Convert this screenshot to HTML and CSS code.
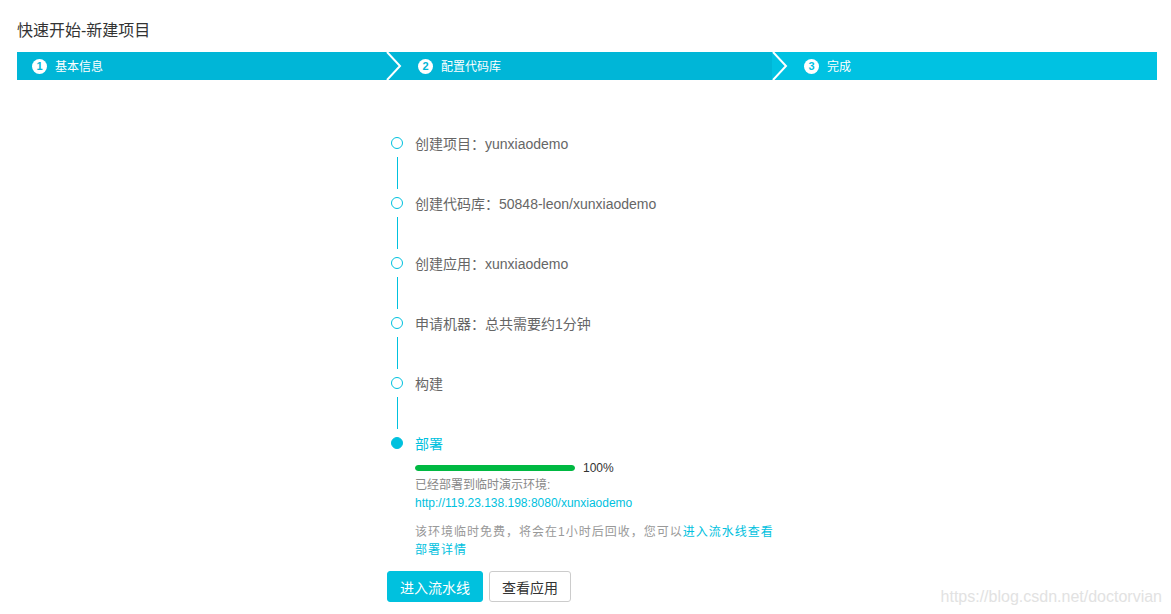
FILE: index.html
```html
<!DOCTYPE html>
<html lang="zh-CN">
  <head>
    <meta charset="UTF-8" />
    <meta name="viewport" content="width=device-width, initial-scale=1.0" />
    <title>快速开始-新建项目</title>
    <link rel="stylesheet" href="styles.css">
  </head>
  <body>
    <div class="page">
      <h1 class="title">快速开始-新建项目</h1>

      <!-- Steps -->
      <div class="steps">
        <div class="step step-first done">
          <span class="step-num">1</span>
          <span class="step-label">基本信息</span>
          <svg class="chevron" width="18" height="28" viewBox="0 0 18 28">
            <polyline points="1,0 14,14 1,28" fill="none" stroke="#fff" stroke-width="2" />
          </svg>
        </div>
        <div class="step done">
          <span class="step-num">2</span>
          <span class="step-label">配置代码库</span>
          <svg class="chevron" width="18" height="28" viewBox="0 0 18 28">
            <polyline points="1,0 14,14 1,28" fill="none" stroke="#fff" stroke-width="2" />
          </svg>
        </div>
        <div class="step current">
          <span class="step-num">3</span>
          <span class="step-label">完成</span>
        </div>
      </div>

      <!-- Result -->
      <div class="result">
        <ul class="timeline">
          <li class="tl-item">
            <span class="tl-dot"></span>
            <span class="tl-text">创建项目：yunxiaodemo</span>
          </li>
          <li class="tl-line"></li>
          <li class="tl-item">
            <span class="tl-dot"></span>
            <span class="tl-text">创建代码库：50848-leon/xunxiaodemo</span>
          </li>
          <li class="tl-line"></li>
          <li class="tl-item">
            <span class="tl-dot"></span>
            <span class="tl-text">创建应用：xunxiaodemo</span>
          </li>
          <li class="tl-line"></li>
          <li class="tl-item">
            <span class="tl-dot"></span>
            <span class="tl-text">申请机器：总共需要约1分钟</span>
          </li>
          <li class="tl-line"></li>
          <li class="tl-item">
            <span class="tl-dot"></span>
            <span class="tl-text">构建</span>
          </li>
          <li class="tl-line"></li>
          <li class="tl-item active">
            <span class="tl-dot"></span>
            <span class="tl-text">部署</span>
          </li>
        </ul>

        <div class="deploy">
          <div class="progress-row">
            <div class="progress"><div class="progress-fill" style="width: 100%"></div></div>
            <span class="progress-text">100%</span>
          </div>
          <div class="deploy-info">
            已经部署到临时演示环境:<br />
            <a href="#">http://119.23.138.198:8080/xunxiaodemo</a>
          </div>
          <p class="deploy-note">
            <span>该环境临时免费，将会在1小时后回收，您可以</span><a href="#">进入流水线查看</a><br />
            <a href="#">部署详情</a>
          </p>
        </div>

        <div class="actions">
          <button class="btn btn-primary">进入流水线</button>
          <button class="btn">查看应用</button>
        </div>
      </div>
    </div>

    <div class="watermark">https://blog.csdn.net/doctorvian</div>
  </body>
</html>
```

FILE: styles.css
```css
body {
  margin: 0;
  font-family: "Liberation Sans", "Noto Sans CJK SC", sans-serif;
  color: #333;
  background: #fff;
}

.page {
  padding: 0 14px 0 17px;
}

.title {
  margin: 0;
  padding-top: 20px;
  font-size: 16px;
  font-weight: normal;
  line-height: 22px;
  color: #333;
}

/* steps bar */
.steps {
  display: flex;
  height: 28px;
  margin-top: 10px;
}

.step {
  position: relative;
  box-sizing: border-box;
  display: flex;
  align-items: center;
  flex: none;
  width: 386px;
  padding-left: 32px;
  padding-top: 1px;
  background-color: #00c2e2;
  color: #fff;
  font-size: 12px;
  line-height: 14px;
}

.step.done {
  background-color: #00b6d7;
}

.step-first {
  width: 369px;
  padding-left: 15px;
}

.step.current {
  flex: 1;
}

.step-num {
  width: 15px;
  height: 15px;
  border-radius: 50%;
  background: #fff;
  color: #00b6d7;
  font-size: 11px;
  font-weight: bold;
  line-height: 15px;
  text-align: center;
  margin-right: 8px;
}

.step.current .step-num {
  color: #00c2e2;
}

.chevron {
  position: absolute;
  right: -18px;
  top: 0;
  z-index: 1;
}

/* result timeline */
.result {
  margin-top: 53px;
  margin-left: 370px;
}

.timeline {
  list-style: none;
  margin: 0;
  padding: 0 0 0 4px;
}

.tl-item {
  display: flex;
  align-items: center;
  height: 20px;
}

.tl-dot {
  width: 12px;
  height: 12px;
  box-sizing: border-box;
  border: 1.5px solid #00c1de;
  border-radius: 50%;
  margin-right: 12px;
}

.tl-text {
  font-size: 14px;
  color: #666;
}

.tl-item.active .tl-dot {
  background: #00c1de;
}

.tl-item.active .tl-text {
  color: #00c1de;
}

.tl-line {
  width: 1px;
  height: 32px;
  margin: 4px 0 4px 5.5px;
  background: #00c1de;
}

.deploy {
  padding-left: 28px;
}

.progress-row {
  display: flex;
  align-items: center;
  height: 14px;
  margin-top: 8px;
}

.progress {
  width: 160px;
  height: 6px;
  border-radius: 3px;
  background: #eee;
  overflow: hidden;
}

.progress-fill {
  height: 100%;
  background: #00b942;
  border-radius: 3px;
}

.progress-text {
  margin-left: 8px;
  font-size: 12px;
  color: #333;
}

.deploy-info {
  margin-top: 1px;
  font-size: 12px;
  line-height: 18px;
  color: #888;
}

.deploy a {
  color: #00c1de;
  text-decoration: none;
}

.deploy-note {
  margin: 11px 0 0;
  font-size: 12px;
  letter-spacing: 1px;
  line-height: 18px;
  color: #999;
}

.actions {
  display: flex;
  gap: 6px;
  margin-top: 12px;
}

.btn {
  height: 31px;
  padding: 0 12px;
  border: 1px solid #ccc;
  border-radius: 3px;
  background: #fff;
  color: #333;
  font-family: inherit;
  font-size: 14px;
  cursor: pointer;
}

.btn-primary {
  border-color: #00c1de;
  background: #00c1de;
  color: #fff;
}

.watermark {
  position: absolute;
  right: 9px;
  bottom: 8px;
  font-size: 16px;
  color: #e2e2e2;
}
```
